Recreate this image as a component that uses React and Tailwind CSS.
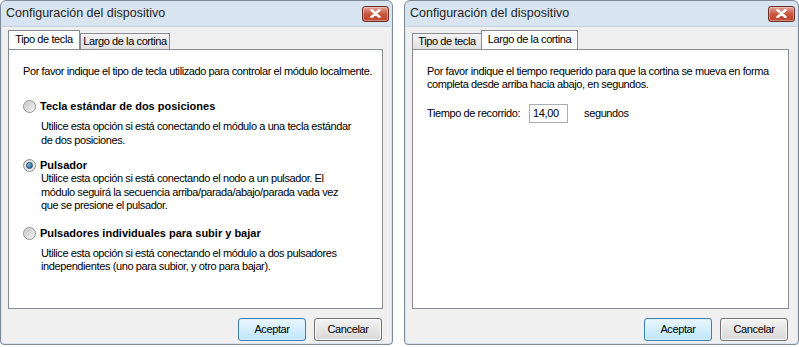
import React from 'react'

const font = { fontFamily: '"Liberation Sans", Arial, sans-serif' }

function CloseButton() {
  return (
    <div className="flex h-[16px] w-[27px] items-center justify-center rounded-[3px] border border-[#6b2f28] bg-gradient-to-b from-[#e3a598] via-[#c9553e] to-[#c0452e] shadow-[inset_0_0_0_1px_rgba(255,255,255,0.35)]">
      <svg width="11" height="9" viewBox="0 0 11 9">
        <path d="M1.5 1 L9.5 8 M9.5 1 L1.5 8" stroke="#fff" strokeWidth="2.4" strokeLinecap="round" />
      </svg>
    </div>
  )
}

function Tab({ label, active, className }) {
  if (active) {
    return (
      <div className={'relative z-10 -mb-px flex h-[19px] items-center justify-center border border-b-0 border-[#898c95] bg-white pb-[1px] ' + className}>
        {label}
      </div>
    )
  }
  return (
    <div className={'mt-[3px] flex h-[16px] items-center justify-center border border-b-0 border-[#898c95] bg-gradient-to-b from-[#f3f3f3] to-[#e0e0e0] ' + className}>
      {label}
    </div>
  )
}

function Radio({ checked }) {
  return (
    <div className="flex h-[13px] w-[13px] items-center justify-center rounded-full border border-[#8e8f8f] bg-gradient-to-br from-[#d4d4d4] to-[#f8f8f8]">
      {checked ? (
        <div className="h-[7px] w-[7px] rounded-full border border-[#1c4a6f] bg-gradient-to-br from-[#8fd0f0] to-[#1b5f95]" />
      ) : (
        <div className="h-[9px] w-[9px] rounded-full bg-gradient-to-br from-[#c6c6c6] to-[#f4f4f4]" />
      )}
    </div>
  )
}

function Option({ title, checked, lines, className, descClass }) {
  return (
    <div className={className}>
      <div className="flex h-[14px] items-center gap-[4px]">
        <Radio checked={checked} />
        <span className="font-bold tracking-normal">{title}</span>
      </div>
      <div className={'pl-[18px] leading-[13.5px] whitespace-nowrap ' + descClass}>
        {lines.map((l) => (
          <div key={l}>{l}</div>
        ))}
      </div>
    </div>
  )
}

function Dialog({ tab, children }) {
  return (
    <div className="flex h-[345px] flex-col rounded-t-[6px] rounded-b-[4px] border border-[#7f8a99] bg-[#d9e4f1]">
      <div className="flex h-[25px] shrink-0 items-center justify-between pl-[5px] pr-[3px] text-[12.5px] tracking-normal text-[#1e1e1e]">
        <span className="pb-[1px]">Configuración del dispositivo</span>
        <CloseButton />
      </div>
      <div className="mx-[1px] mb-[1px] flex flex-1 flex-col rounded-b-[3px] border-t border-[#c4d1e1] bg-[#f0f0f0] pt-[3px] pl-[6px] pr-[8px]">
        <div className="flex">
          {tab === 0 ? (
            <>
              <Tab label="Tipo de tecla" active className="w-[72px]" />
              <Tab label="Largo de la cortina" className="w-[90px]" />
            </>
          ) : (
            <>
              <Tab label="Tipo de tecla" className="w-[70px]" />
              <Tab label="Largo de la cortina" active className="-ml-px w-[97px]" />
            </>
          )}
        </div>
        <div className="h-[260px] border border-[#898c95] bg-white">{children}</div>
        <div className="mt-[9px] flex justify-end gap-[8px] pr-[1px]">
          <button className="h-[23px] w-[68px] rounded-[3px] border border-[#3c7fb1] bg-gradient-to-b from-[#eaf6fd] to-[#bee6fd] shadow-[inset_0_0_0_1px_#d7f0fc]">
            Aceptar
          </button>
          <button className="h-[23px] w-[68px] rounded-[3px] border border-[#707070] bg-gradient-to-b from-[#f2f2f2] to-[#d9d9d9] shadow-[inset_0_0_0_1px_#fafafa]">
            Cancelar
          </button>
        </div>
      </div>
    </div>
  )
}

export default function App() {
  return (
    <div className="flex h-[347px] w-[799px] gap-[11px] bg-white text-[11px] tracking-[-0.4px] text-black" style={font}>
      <div className="w-[393px]">
        <Dialog tab={0}>
          <div className="pl-[14px] pt-[14px]">
            <p className="leading-[14px] whitespace-nowrap">Por favor indique el tipo de tecla utilizado para controlar el módulo localmente.</p>
            <Option
              className="mt-[21px]"
              descClass="mt-[7px]"
              title="Tecla estándar de dos posiciones"
              lines={['Utilice esta opción si está conectando el módulo a una tecla estándar', 'de dos posiciones.']}
            />
            <Option
              className="mt-[11px]"
              descClass="mt-0"
              checked
              title="Pulsador"
              lines={[
                'Utilice esta opción si está conectando el nodo a un pulsador. El',
                'módulo seguirá la secuencia arriba/parada/abajo/parada vada vez',
                'que se presione el pulsador.',
              ]}
            />
            <Option
              className="mt-[14px]"
              descClass="mt-[6px]"
              title="Pulsadores individuales para subir y bajar"
              lines={[
                'Utilice esta opción si está conectando el módulo a dos pulsadores',
                'independientes (uno para subior, y otro para bajar).',
              ]}
            />
          </div>
        </Dialog>
      </div>
      <div className="w-[395px]">
        <Dialog tab={1}>
          <div className="pl-[14px] pt-[15px] leading-[12.5px] whitespace-nowrap">
            <p>Por favor indique el tiempo requerido para que la cortina se mueva en forma</p>
            <p>completa desde arriba hacia abajo, en segundos.</p>
            <div className="mt-[14px] flex items-center">
              <span>Tiempo de recorrido:</span>
              <div className="ml-[9px] flex h-[19px] w-[39px] items-center border border-[#abadb3] px-[3px]">14,00</div>
              <span className="ml-[16px]">segundos</span>
            </div>
          </div>
        </Dialog>
      </div>
    </div>
  )
}
